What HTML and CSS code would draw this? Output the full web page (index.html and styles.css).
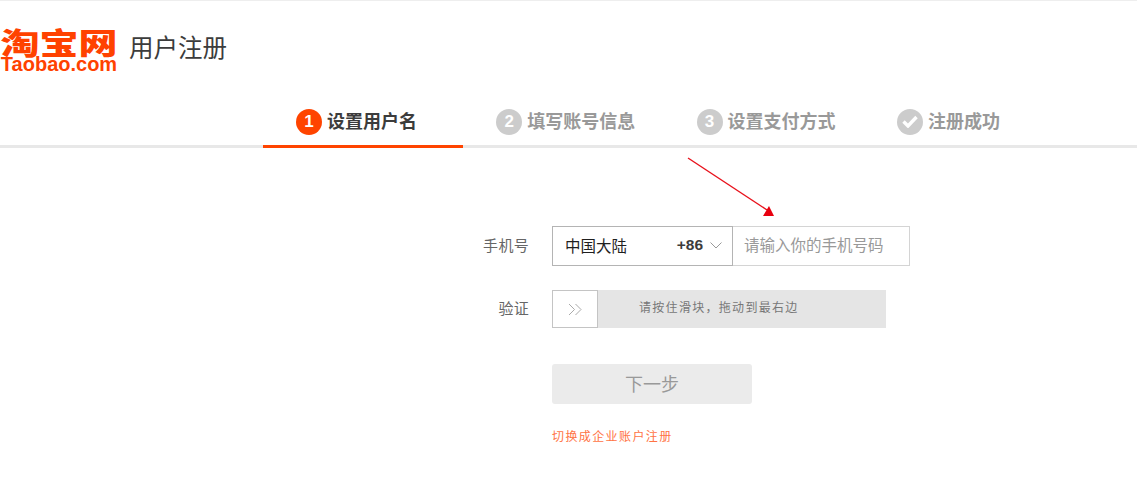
FILE: index.html
```html
<!DOCTYPE html>
<html lang="zh-CN">
<head>
<meta charset="utf-8">
<title>用户注册</title>
<link rel="stylesheet" href="styles.css">
</head>
<body>
<header class="header">
  <div class="logo">
    <div class="logo-cn">淘宝网</div>
    <div class="logo-en">Taobao.com</div>
  </div>
  <h1 class="title">用户注册</h1>
</header>
<nav class="steps">
  <div class="step active"><span class="dot">1</span><span class="step-name">设置用户名</span></div>
  <div class="step"><span class="dot">2</span><span class="step-name">填写账号信息</span></div>
  <div class="step"><span class="dot">3</span><span class="step-name">设置支付方式</span></div>
  <div class="step"><span class="dot"><svg width="16" height="13" viewBox="0 0 16 13"><path d="M1.500 6.500L6 11L14.500 2" fill="none" stroke="#fff" stroke-width="3.400"/></svg></span><span class="step-name">注册成功</span></div>
</nav>
<svg class="arrow" width="100" height="70" viewBox="0 0 100 70">
  <line x1="1" y1="1" x2="80" y2="53" stroke="#e8101a" stroke-width="1.400"/>
  <polygon points="87,59 76,59 82,49" fill="#e8000f"/>
</svg>
<main class="form">
  <div class="row phone-row">
    <label class="label">手机号</label>
    <div class="country">
      <span class="country-name">中国大陆</span>
      <span class="code">+86</span>
      <svg class="chev" width="12" height="7" viewBox="0 0 12 7"><path d="M.5 .5L6 6L11.500 .5" fill="none" stroke="#999" stroke-width="1"/></svg>
    </div>
    <div class="phone">请输入你的手机号码</div>
  </div>
  <div class="row slider-row">
    <label class="label">验证</label>
    <div class="slider">
      <div class="handle"><svg width="15" height="13" viewBox="0 0 15 13"><path d="M1 1L6.500 6.500L1 12M7.500 1L13 6.500L7.500 12" fill="none" stroke="#aaa" stroke-width="1"/></svg></div>
      <div class="slider-text">请按住滑块，拖动到最右边</div>
    </div>
  </div>
  <button class="next" type="button">下一步</button>
  <a class="switch" href="#">切换成企业账户注册</a>
</main>
</body>
</html>
```
FILE: styles.css
```css
* { box-sizing: border-box; }
html, body { margin: 0; padding: 0; background: #fff; }
body {
  position: relative;
  height: 500px;
  overflow: hidden;
  border-top: 1px solid #eee;
  font-family: "Liberation Sans", "Noto Sans CJK SC", sans-serif;
  color: #3c3c3c;
}
.header {
  display: flex;
  align-items: flex-start;
  height: 94px;
  padding-top: 25px;
}
.logo { width: 118px; margin-right: 11px; color: #ff4200; text-align: center; }
.logo-cn {
  height: 30px;
  font-size: 39px;
  font-weight: 900;
  line-height: 30px;
  font-family: "Noto Sans CJK SC", sans-serif;
  white-space: nowrap;
  transform: scaleY(.76);
}
.logo-en {
  font-size: 20px;
  font-weight: 700;
  line-height: 16px;
  white-space: nowrap;
}
.title { margin: 0; font-size: 24.500px; font-weight: 400; line-height: 46px; color: #3c3c3c; }
.steps {
  display: flex;
  height: 53px;
  padding-left: 263px;
  border-bottom: 3px solid #e8e8e8;
}
.step {
  display: flex;
  align-items: center;
  gap: 5px;
  width: 200.300px;
  height: 53px;
  padding: 3px 0 0 33px;
  border-bottom: 3px solid transparent;
  color: #999;
  font-size: 18px;
  font-weight: 700;
}
.step-name { margin-top: -4px; }
.step.active {
  color: #3c3c3c;
  border-bottom-color: #ff4400;
}
.dot {
  display: flex;
  align-items: center;
  justify-content: center;
  width: 26px;
  height: 26px;
  border-radius: 50%;
  background: #ccc;
  color: #fff;
  font-size: 17px;
  font-weight: 700;
}
.active .dot { background: #ff4400; }
.arrow { position: absolute; left: 687px; top: 156px; }
.form { padding: 78px 0 0 552px; position: relative; }
.row { display: flex; position: relative; }
.label {
  position: absolute;
  right: calc(100% + 23px);
  white-space: nowrap;
  color: #666;
  font-size: 15px;
  letter-spacing: .3px;
}
.phone-row { height: 40px; }
.phone-row .label { line-height: 40px; }
.country {
  display: flex;
  align-items: center;
  width: 181px;
  height: 40px;
  padding: 0 10px 2px 12px;
  border: 1px solid #b4b4b4;
  font-size: 15.500px;
}
.country-name { flex: 1; color: #1f1f1f; font-weight: 400; }
.code { font-weight: 700; font-size: 15.500px; margin-right: 7px; }
.phone {
  width: 177px;
  height: 40px;
  line-height: 38px;
  border: 1px solid #d4d4d4;
  border-left: 0;
  padding-left: 11px;
  color: #999;
  font-size: 15.500px;
}
.slider-row { margin-top: 24px; height: 38px; }
.slider-row .label { line-height: 38px; }
.slider { display: flex; width: 334px; height: 38px; background: #e5e5e5; }
.handle {
  display: flex;
  align-items: center;
  justify-content: center;
  width: 46px;
  height: 38px;
  background: #fff;
  border: 1px solid #c4c4c4;
}
.slider-text {
  padding-left: 41px;
  line-height: 36px;
  font-size: 12px;
  letter-spacing: 1.300px;
  color: #777;
}
.next {
  display: block;
  width: 200px;
  height: 40px;
  margin-top: 36px;
  padding: 0 0 2px;
  border: 0;
  border-radius: 3px;
  background: #ebebeb;
  color: #999;
  font: 400 18px "Liberation Sans", "Noto Sans CJK SC", sans-serif;
}
.switch {
  display: block;
  margin-top: 23px;
  font-size: 12px;
  letter-spacing: 1.400px;
  line-height: 20px;
  color: #ff7344;
  text-decoration: none;
}
```
